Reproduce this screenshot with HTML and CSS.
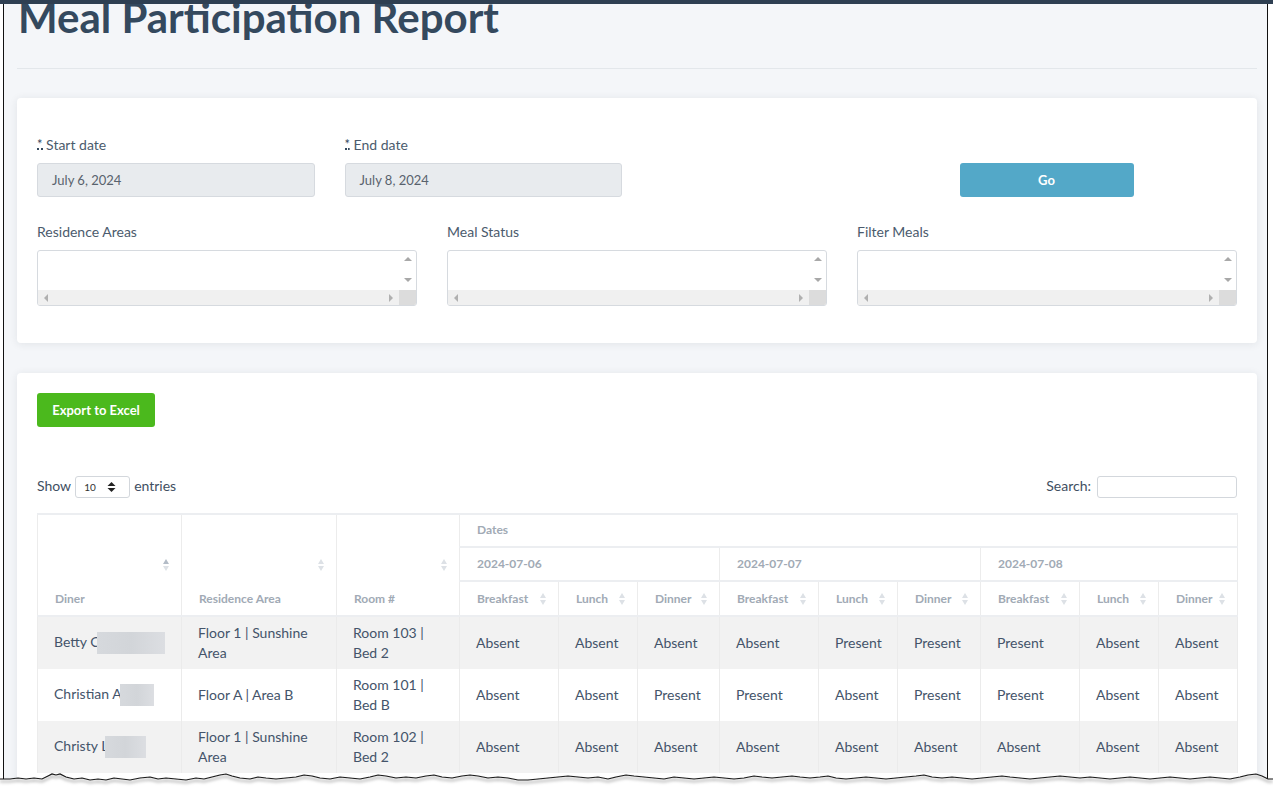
FILE: index.html
```html
<!DOCTYPE html>
<html lang="en">
<head>
<meta charset="utf-8">
<title>Meal Participation Report</title>
<link rel="stylesheet" href="styles.css">
</head>
<body>
<div class="sheet">
  <div class="frame">
    <div class="page">
      <header class="page-head">
        <h1>Meal Participation Report</h1>
      </header>

      <section class="card filters">
        <div class="row4">
          <div class="field">
            <label><abbr title="required">*</abbr> Start date</label>
            <div class="input ro">July 6, 2024</div>
          </div>
          <div class="field">
            <label><abbr title="required">*</abbr> End date</label>
            <div class="input ro">July 8, 2024</div>
          </div>
          <div class="field"></div>
          <div class="field">
            <label>&nbsp;</label>
            <button class="btn go">Go</button>
          </div>
        </div>
        <div class="row3">
          <div class="field">
            <label>Residence Areas</label>
            <div class="multi">
              <div class="m-body"></div>
              <div class="vbar"><i class="tri up"></i><i class="tri down"></i></div>
              <div class="hbar"><i class="tri left"></i><i class="tri right"></i></div>
              <div class="corner"></div>
            </div>
          </div>
          <div class="field">
            <label>Meal Status</label>
            <div class="multi">
              <div class="m-body"></div>
              <div class="vbar"><i class="tri up"></i><i class="tri down"></i></div>
              <div class="hbar"><i class="tri left"></i><i class="tri right"></i></div>
              <div class="corner"></div>
            </div>
          </div>
          <div class="field">
            <label>Filter Meals</label>
            <div class="multi">
              <div class="m-body"></div>
              <div class="vbar"><i class="tri up"></i><i class="tri down"></i></div>
              <div class="hbar"><i class="tri left"></i><i class="tri right"></i></div>
              <div class="corner"></div>
            </div>
          </div>
        </div>
      </section>

      <section class="card report">
        <button class="btn excel">Export to Excel</button>

        <div class="dt-top">
          <div class="dt-length">Show
            <span class="len-select">10
              <svg class="updown" width="9" height="10" viewBox="0 0 9 10"><path d="M4.5 0 L8.5 4 L0.5 4 Z M4.5 10 L8.5 6 L0.5 6 Z" fill="#222"/></svg>
            </span>
            entries</div>
          <div class="dt-search">Search: <span class="search-box"></span></div>
        </div>

        <table class="grid">
          <colgroup>
            <col style="width:144px"><col style="width:155px"><col style="width:123px">
            <col style="width:99px"><col style="width:79px"><col style="width:82px">
            <col style="width:99px"><col style="width:79px"><col style="width:83px">
            <col style="width:99px"><col style="width:79px"><col style="width:79px">
          </colgroup>
          <thead>
            <tr>
              <th rowspan="3" class="sort tall asc">Diner<span class="si"></span></th>
              <th rowspan="3" class="sort tall">Residence Area<span class="si"></span></th>
              <th rowspan="3" class="sort tall">Room #<span class="si"></span></th>
              <th colspan="9">Dates</th>
            </tr>
            <tr class="days">
              <th colspan="3">2024-07-06</th>
              <th colspan="3">2024-07-07</th>
              <th colspan="3">2024-07-08</th>
            </tr>
            <tr class="meals">
              <th class="sort">Breakfast<span class="si"></span></th>
              <th class="sort">Lunch<span class="si"></span></th>
              <th class="sort">Dinner<span class="si"></span></th>
              <th class="sort">Breakfast<span class="si"></span></th>
              <th class="sort">Lunch<span class="si"></span></th>
              <th class="sort">Dinner<span class="si"></span></th>
              <th class="sort">Breakfast<span class="si"></span></th>
              <th class="sort">Lunch<span class="si"></span></th>
              <th class="sort">Dinner<span class="si"></span></th>
            </tr>
          </thead>
          <tbody>
            <tr class="odd">
              <td>Betty C<span class="redact r1"></span></td>
              <td>Floor 1 | Sunshine Area</td>
              <td>Room 103 | Bed 2</td>
              <td>Absent</td><td>Absent</td><td>Absent</td>
              <td>Absent</td><td>Present</td><td>Present</td>
              <td>Present</td><td>Absent</td><td>Absent</td>
            </tr>
            <tr>
              <td>Christian A<span class="redact r2"></span></td>
              <td>Floor A | Area B</td>
              <td>Room 101 | Bed B</td>
              <td>Absent</td><td>Absent</td><td>Present</td>
              <td>Present</td><td>Absent</td><td>Present</td>
              <td>Present</td><td>Absent</td><td>Absent</td>
            </tr>
            <tr class="odd">
              <td>Christy L<span class="redact r3"></span></td>
              <td>Floor 1 | Sunshine Area</td>
              <td>Room 102 | Bed 2</td>
              <td>Absent</td><td>Absent</td><td>Absent</td>
              <td>Absent</td><td>Absent</td><td>Absent</td>
              <td>Absent</td><td>Absent</td><td>Absent</td>
            </tr>
          </tbody>
        </table>
      </section>
    </div>
  </div>

  <svg class="torn" width="1273" height="28" viewBox="0 0 1273 28">
    <defs>
      <filter id="sh" x="-5%" y="-100%" width="110%" height="400%">
        <feDropShadow dx="0" dy="2.5" stdDeviation="1.6" flood-color="#000" flood-opacity="0.55"/>
      </filter>
    </defs>
    <path fill="#fff" d="M0,12 L10,12 18,11 26,12 34,11 42,12 48,9 52,7 56,8 60,7 66,10 74,12 82,11 90,13 98,12 106,13 114,11 122,12 130,13 140,11 150,10 158,12 166,11 176,12 186,13 196,11 204,12 212,10 220,8 226,7 232,9 240,11 250,12 258,10 266,11 276,12 286,11 296,10 304,8 312,9 320,11 330,12 340,10 350,11 360,12 370,10 378,8 386,9 396,11 406,10 416,11 426,9 434,8 442,10 452,11 462,9 470,8 478,9 488,11 498,10 508,11 518,13 528,13 538,12 548,11 558,10 568,9 578,10 588,11 598,10 608,12 616,10 626,8 634,9 644,10 654,11 664,12 674,10 684,11 694,12 704,11 714,10 724,11 734,12 744,11 754,9 762,10 772,11 782,10 792,9 800,10 810,11 820,10 828,9 836,11 846,12 856,11 866,10 876,11 886,12 896,11 906,10 916,9 924,8 932,10 942,11 952,10 962,11 972,12 982,11 992,10 1002,9 1010,10 1020,11 1030,12 1040,11 1050,10 1060,9 1070,10 1080,11 1090,10 1100,11 1110,12 1120,11 1130,10 1140,11 1150,12 1160,11 1170,10 1180,11 1190,12 1200,11 1210,10 1220,11 1230,12 1240,10 1248,8 1256,7 1262,9 1268,12 1273,12 L1273,28 L0,28 Z"/>
    <path filter="url(#sh)" fill="none" stroke="#1a1a1a" stroke-width="1.2" d="M0,12 L10,12 18,11 26,12 34,11 42,12 48,9 52,7 56,8 60,7 66,10 74,12 82,11 90,13 98,12 106,13 114,11 122,12 130,13 140,11 150,10 158,12 166,11 176,12 186,13 196,11 204,12 212,10 220,8 226,7 232,9 240,11 250,12 258,10 266,11 276,12 286,11 296,10 304,8 312,9 320,11 330,12 340,10 350,11 360,12 370,10 378,8 386,9 396,11 406,10 416,11 426,9 434,8 442,10 452,11 462,9 470,8 478,9 488,11 498,10 508,11 518,13 528,13 538,12 548,11 558,10 568,9 578,10 588,11 598,10 608,12 616,10 626,8 634,9 644,10 654,11 664,12 674,10 684,11 694,12 704,11 714,10 724,11 734,12 744,11 754,9 762,10 772,11 782,10 792,9 800,10 810,11 820,10 828,9 836,11 846,12 856,11 866,10 876,11 886,12 896,11 906,10 916,9 924,8 932,10 942,11 952,10 962,11 972,12 982,11 992,10 1002,9 1010,10 1020,11 1030,12 1040,11 1050,10 1060,9 1070,10 1080,11 1090,10 1100,11 1110,12 1120,11 1130,10 1140,11 1150,12 1160,11 1170,10 1180,11 1190,12 1200,11 1210,10 1220,11 1230,12 1240,10 1248,8 1256,7 1262,9 1268,12 1273,12"/>
  </svg>
</div>
</body>
</html>
```

FILE: styles.css
```css
* { box-sizing: border-box; }

html, body {
  margin: 0;
  background: #ffffff;
  font-family: Lato, "Liberation Sans", sans-serif;
}

.sheet {
  position: relative;
  width: 1273px;
  height: 793px;
  overflow: hidden;
  background: #ffffff;
  border-top: 4px solid #2e3f52;
}

.frame {
  margin-left: 3px;
  width: 1265px;
  height: 789px;
  border-left: 1px solid #111;
  border-right: 1px solid #111;
  background: #f4f6f9;
  overflow: hidden;
}

.page {
  padding: 0 10px 0 13px;
}

.page-head {
  padding-bottom: 28px;
  border-bottom: 1px solid #e3e7eb;
}

.page-head h1 {
  margin: -9px 0 0 1px;
  font-size: 42px;
  line-height: 45px;
  font-weight: 700;
  color: #34495e;
}

.card {
  background: #fff;
  border-radius: 4px;
  box-shadow: 0 1px 8px rgba(30, 45, 60, 0.09);
  padding: 20px;
}

.filters {
  margin-top: 29px;
  padding: 37px 20px 37px;
}

.row4 {
  display: grid;
  grid-template-columns: repeat(4, 1fr);
  column-gap: 30px;
}

.row3 {
  display: grid;
  grid-template-columns: repeat(3, 1fr);
  column-gap: 30px;
  margin-top: 25px;
}

.field label {
  display: block;
  font-size: 14px;
  line-height: 20px;
  color: #4b5b6d;
  margin-bottom: 8px;
}

.field abbr {
  text-decoration: none;
  border-bottom: 2px dotted #34495e;
  font-size: 13px;
  line-height: 8px;
  display: inline-block;
  height: 10px;
  vertical-align: 1px;
  color: #34495e;
}

.input {
  height: 34px;
  border: 1px solid #d6dadf;
  border-radius: 3px;
  padding: 0 14px;
  font-size: 13px;
  line-height: 32px;
  color: #58626d;
}

.input.ro {
  background: #e8ebee;
}

.btn {
  border: none;
  border-radius: 3px;
  color: #fff;
  font-family: Lato, "Liberation Sans", sans-serif;
  font-weight: 700;
  font-size: 13px;
  height: 34px;
  padding: 0 13px;
  cursor: pointer;
}

.go {
  width: 174px;
  background: #53a8c8;
}

.multi {
  height: 56px;
  border: 1px solid #d6dadf;
  border-radius: 3px;
  overflow: hidden;
  display: grid;
  grid-template-columns: 1fr 17px;
  grid-template-rows: 1fr 15px;
  background: #fff;
}

.vbar {
  display: flex;
  flex-direction: column;
  align-items: center;
  justify-content: space-between;
  padding: 6px 0 8px;
}

.hbar {
  background: #f0f0f0;
  display: flex;
  align-items: center;
  justify-content: space-between;
  padding: 0 6px 0 6px;
}

.corner {
  background: #dcdcdc;
}

.tri {
  display: block;
  width: 0;
  height: 0;
}
.tri.up { border-left: 4px solid transparent; border-right: 4px solid transparent; border-bottom: 4px solid #a8a8a8; }
.tri.down { border-left: 4px solid transparent; border-right: 4px solid transparent; border-top: 4px solid #a8a8a8; }
.tri.left { border-top: 4px solid transparent; border-bottom: 4px solid transparent; border-right: 4px solid #b0b0b0; }
.tri.right { border-top: 4px solid transparent; border-bottom: 4px solid transparent; border-left: 4px solid #b0b0b0; }

.report {
  margin-top: 30px;
  padding: 20px 20px 60px;
}

.excel {
  width: 118px;
  padding: 0;
  background: #4bb91d;
  display: block;
}

.dt-top {
  margin-top: 49px;
  display: flex;
  justify-content: space-between;
  align-items: center;
  height: 22px;
  font-size: 14px;
  line-height: 18px;
  color: #3f4f62;
}

.dt-length {
  display: flex;
  align-items: center;
  gap: 4px;
  margin-top: -2px;
}

.len-select {
  width: 55px;
  height: 22px;
  margin-top: 2px;
  border: 1px solid #d3d7dc;
  border-radius: 3px;
  font-size: 10px;
  color: #333;
  display: inline-flex;
  align-items: center;
  justify-content: space-between;
  padding: 0 13px 0 8px;
}

.dt-search {
  display: flex;
  align-items: center;
  gap: 6px;
  margin-top: -2px;
}

.search-box {
  display: inline-block;
  width: 140px;
  height: 22px;
  margin-top: 2px;
  border: 1px solid #d3d7dc;
  border-radius: 3px;
  background: #fff;
}

.grid {
  margin-top: 15px;
  width: 1200px;
  table-layout: fixed;
  border-collapse: collapse;
  border-top: 2px solid #eceef1;
  border-left: 1px solid #ececec;
}

.grid th {
  position: relative;
  text-align: left;
  font-size: 12px;
  font-weight: 700;
  line-height: 16px;
  color: #a1aab5;
  padding: 7px 16px 8px 17px;
  height: 33px;
  border-bottom: 2px solid #eceef1;
  border-right: 1px solid #ececec;
  white-space: nowrap;
}

.grid tr.days th {
  padding-top: 8px;
  height: 34px;
}

.grid tr.meals th {
  padding-top: 9px;
  height: 35px;
}

.grid th.tall {
  vertical-align: bottom;
}

.si {
  position: absolute;
  right: 11px;
  top: 50%;
  margin-top: -6px;
  width: 7px;
  height: 12px;
}
.si::before, .si::after {
  content: "";
  position: absolute;
  left: 0;
  border-left: 3.5px solid transparent;
  border-right: 3.5px solid transparent;
}
.si::before { top: 0; border-bottom: 5px solid #dde1e6; }
.si::after { bottom: 0; border-top: 5px solid #dde1e6; }
.asc .si::before { border-bottom-color: #b3bcc7; }

.grid td {
  font-size: 14px;
  line-height: 20px;
  color: #44546a;
  padding: 6px 12px 6px 16px;
  height: 52px;
  border-right: 1px solid #ebebeb;
  vertical-align: middle;
}

.grid tr.odd td {
  background: #f2f2f2;
}

.redact {
  display: inline-block;
  vertical-align: middle;
  height: 22px;
  background: linear-gradient(90deg, #d6d9dd, #d2d5d9 50%, #dcdee2);
  filter: blur(0.6px);
}
.r1 { width: 68px; margin-left: -3px; }
.r2 { width: 34px; margin-left: -2px; }
.r3 { width: 41px; margin-left: -3px; }

.torn {
  position: absolute;
  left: 0;
  top: 763px;
}
```
